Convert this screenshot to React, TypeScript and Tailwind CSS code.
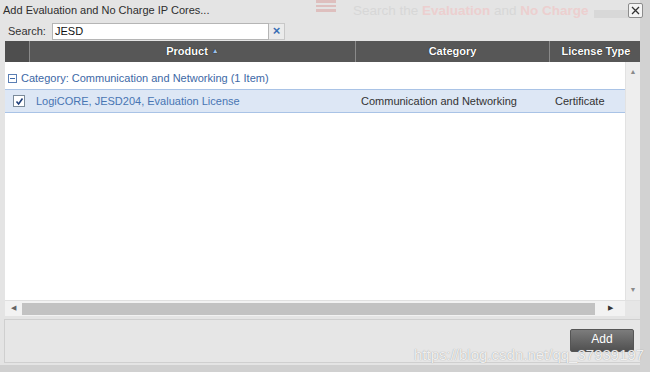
import React from 'react';

function Checkbox() {
  return (
    <div className="w-[12px] h-[12px] border border-[#7a8a99] bg-white flex items-center justify-center">
      <svg width="9" height="9" viewBox="0 0 9 9">
        <path d="M1.5 4.5 L3.6 7 L7.5 1.5" stroke="#1f3f7a" strokeWidth="1.6" fill="none" />
      </svg>
    </div>
  );
}

export default function App() {
  return (
    <div className="relative w-[650px] h-[372px] overflow-hidden bg-[#e4e4e4] font-['Liberation_Sans',Arial,sans-serif] text-[#333]">
      {/* faded page behind the title bar */}
      <div className="absolute left-[316px] top-0 w-[20px] h-[12px] flex flex-col gap-[2px] opacity-20">
        <div className="h-[3px] bg-[#c9302c]" />
        <div className="h-[3px] bg-[#c9302c]" />
        <div className="h-[3px] bg-[#c9302c]" />
      </div>
      <div className="absolute left-[353px] top-[1px] text-[13.5px] text-[#d7d7d7] whitespace-nowrap">
        Search the <span className="text-[#eccfcf] font-bold">Evaluation</span> and <span className="text-[#eccfcf] font-bold">No Charge</span>
      </div>
      <div className="absolute left-[594px] top-[10px] w-[44px] h-[8px] bg-[#d8d8d8]" />
      <div className="absolute right-0 top-0 w-[10px] h-full bg-[#d2d2d2]" />

      <div className="relative flex flex-col w-[640px] h-full">
        {/* title */}
        <div className="h-[21px] flex items-center pl-[3px] text-[11px] text-[#2e2e2e]">
          Add Evaluation and No Charge IP Cores...
        </div>
        <button className="absolute left-[628px] top-[3px] w-[15px] h-[15px] border border-[#8c8c8c] bg-[#f4f4f4] rounded-[2px] flex items-center justify-center">
          <svg width="9" height="9" viewBox="0 0 9 9">
            <path d="M1 1 L8 8 M8 1 L1 8" stroke="#333" strokeWidth="1.3" />
          </svg>
        </button>

        {/* search */}
        <div className="h-[20px] flex items-center pl-[8px]">
          <span className="text-[11px] w-[44px] text-[#333]">Search:</span>
          <div className="w-[217px] h-[17px] bg-white border border-[#b5b5b5] flex items-center pl-[2px] text-[11px] text-[#111]">
            JESD
          </div>
          <div className="w-[16px] h-[17px] bg-[#ebebeb] border border-l-0 border-[#c8c8c8] flex items-center justify-center text-[13px] font-bold text-[#3a6fb5]">
            ×
          </div>
        </div>

        {/* grid */}
        <div className="ml-[5px] w-[635px] flex flex-col">
          <div className="h-[21px] flex bg-[#575757] text-white text-[11px] font-bold [text-shadow:0_0_1px_#000]">
            <div className="w-[25px] border-r border-[#8a8a8a] bg-[#4e4e4e]" />
            <div className="w-[326px] border-r border-[#8a8a8a] flex items-center justify-center gap-[4px]">
              Product <span className="text-[7px] text-[#9ec0ea]">▲</span>
            </div>
            <div className="w-[194px] border-r border-[#8a8a8a] flex items-center justify-center">Category</div>
            <div className="flex-1 flex items-center justify-center pl-[2px]">License Type</div>
          </div>

          <div className="h-[238px] flex bg-white">
            <div className="flex-1 flex flex-col pt-[8px]">
              <div className="h-[16px] flex items-center pl-[3px] text-[11px] text-[#3d68a6] gap-[4px]">
                <div className="w-[9px] h-[9px] border border-[#5b7fb4] flex items-center justify-center">
                  <div className="w-[5px] h-[1px] bg-[#3d68a6]" />
                </div>
                Category: Communication and Networking (1 Item)
              </div>
              <div className="mt-[3px] h-[24px] flex items-center bg-[#dde7f5] border-y border-[#a9c3e6] text-[11px]">
                <div className="w-[25px] flex justify-center pl-[3px]">
                  <Checkbox />
                </div>
                <div className="w-[326px] pl-[6px] text-[#4875b3]">LogiCORE, JESD204, Evaluation License</div>
                <div className="w-[194px] pl-[5px] text-[#333]">Communication and Networking</div>
                <div className="flex-1 pl-[5px] text-[#333]">Certificate</div>
              </div>
            </div>
            <div className="w-[15px] bg-[#eeeeee] border-l border-[#e2e2e2] flex flex-col items-center justify-between py-[5px] text-[7px] text-[#8a8a8a]">
              <span>▲</span>
              <span>▼</span>
            </div>
          </div>

          <div className="h-[16px] flex items-center bg-[#f2f2f2] border-t border-[#e0e0e0]">
            <div className="w-[17px] flex justify-center text-[7px] text-[#666]">◀</div>
            <div className="w-[573px] h-[12px] bg-[#c2c2c2]" />
            <div className="w-[30px] flex justify-center text-[7px] text-[#333]">▶</div>
            <div className="flex-1 h-full bg-[#e6e6e6]" />
          </div>
        </div>

        {/* footer */}
        <div className="mt-[3px] ml-[4px] w-[636px] h-[44px] border-t border-l border-b border-[#cfcfcf] bg-[#e6e6e6] flex items-start justify-end pt-[9px] pr-[6px]">
          <button className="w-[64px] h-[23px] rounded-[2px] bg-gradient-to-b from-[#7c7c7c] to-[#505050] border border-[#555] text-white text-[12px] leading-none pb-[3px]">
            Add
          </button>
        </div>
        <div className="flex-1 bg-[#d0d0d0] mt-[2px]" />
      </div>

      {/* watermark */}
      <div className="absolute left-[414px] top-[344px] text-[15px] text-white/85 whitespace-nowrap [text-shadow:0_0_1px_#888]">
        https://blog.csdn.net/qq_37939197
      </div>
    </div>
  );
}
